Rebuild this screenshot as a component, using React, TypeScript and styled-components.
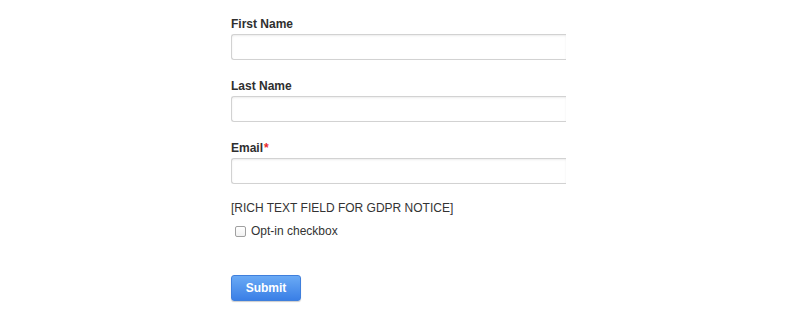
import styled, { createGlobalStyle } from "styled-components";

const GlobalStyle = createGlobalStyle`
  body {
    margin: 0;
    background: #ffffff;
    font-family: "Liberation Sans", Arial, Helvetica, sans-serif;
  }
`;

const Page = styled.div`
  width: 800px;
  height: 316px;
  overflow: hidden;
  padding: 16px 0 0 231px;
  box-sizing: border-box;
`;

const Form = styled.form`
  display: flex;
  flex-direction: column;
  width: 335px;
`;

const Field = styled.div`
  display: flex;
  flex-direction: column;
  margin-bottom: 18px;
`;

const Label = styled.label`
  font-size: 12px;
  line-height: 16px;
  font-weight: bold;
  color: #2f2f2f;
  margin-bottom: 2px;
`;

const Required = styled.span`
  color: #e8262b;
  margin-left: 1px;
`;

const Input = styled.input`
  height: 26px;
  box-sizing: border-box;
  border: 1px solid #d2d2d2;
  border-right: none;
  border-radius: 3px 0 0 3px;
  box-shadow: inset 0 1px 2px rgba(0, 0, 0, 0.08);
  background: #fff;
  padding: 0 6px;
  font-family: inherit;
  font-size: 12px;
`;

const Notice = styled.p`
  margin: -3px 0 8px;
  font-size: 12px;
  line-height: 16px;
  transform: scaleY(1.08);
  transform-origin: top left;
  color: #333;
`;

const CheckRow = styled.label`
  display: flex;
  align-items: center;
  gap: 5px;
  padding-left: 4px;
  font-size: 12px;
  line-height: 16px;
  color: #333;
`;

const Box = styled.input`
  width: 11px;
  height: 11px;
  margin: 0;
  appearance: none;
  border: 1px solid #a0a0a0;
  border-radius: 2px;
  background: linear-gradient(#fff, #f1f1f1);
`;

const SubmitButton = styled.button`
  margin-top: 36px;
  align-self: flex-start;
  width: 70px;
  height: 26px;
  border: 1px solid #3f7fdc;
  border-radius: 3px;
  background: linear-gradient(#6aaaf5, #3a7fe6);
  color: #fff;
  font-family: inherit;
  font-size: 12px;
  font-weight: bold;
  box-shadow: 0 1px 1px rgba(0, 0, 0, 0.2);
`;

const fields = [
  { name: "First Name", required: false },
  { name: "Last Name", required: false },
  { name: "Email", required: true },
];

export default function App() {
  return (
    <>
      <GlobalStyle />
      <Page>
        <Form onSubmit={(e) => e.preventDefault()}>
          {fields.map((f) => (
            <Field key={f.name}>
              <Label>
                {f.name}
                {f.required && <Required>*</Required>}
              </Label>
              <Input type="text" />
            </Field>
          ))}
          <Notice>[RICH TEXT FIELD FOR GDPR NOTICE]</Notice>
          <CheckRow>
            <Box type="checkbox" />
            Opt-in checkbox
          </CheckRow>
          <SubmitButton type="submit">Submit</SubmitButton>
        </Form>
      </Page>
    </>
  );
}
